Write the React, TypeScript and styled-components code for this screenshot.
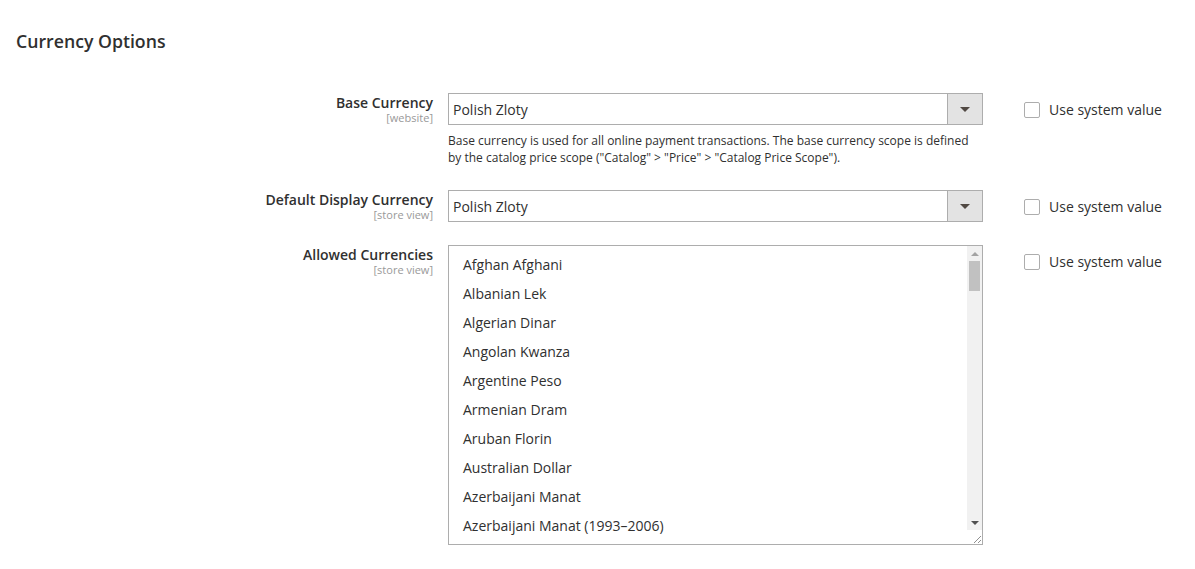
import React from "react";
import styled, { createGlobalStyle } from "styled-components";

const Global = createGlobalStyle`
  html, body { margin: 0; padding: 0; background: #fff; }
  body { font-family: "Open Sans", "Noto Sans", sans-serif; color: #303030; }
`;

const Page = styled.div`
  padding: 30px 0 0 16px;
  width: 1179px;
`;

const Title = styled.h2`
  margin: 0 0 41px;
  font-size: 17.7px;
  font-weight: 600;
  line-height: 22px;
  color: #303030;
`;

const Form = styled.div`
  display: flex;
  flex-direction: column;
  gap: 23px;
`;

const Row = styled.div<{ $extra?: number }>`
  display: grid;
  grid-template-columns: 417px 535px auto;
  column-gap: 15px;
  align-items: start;
  margin-top: ${(p) => p.$extra ?? 0}px;
`;

const LabelCol = styled.div`
  text-align: right;
  padding-top: 1px;
  display: flex;
  flex-direction: column;
  align-items: flex-end;
`;

const LabelText = styled.span`
  font-size: 14px;
  font-weight: 600;
  line-height: 17px;
  color: #303030;
`;

const Scope = styled.span`
  font-size: 11px;
  line-height: 13px;
  color: #999;
`;

const Field = styled.div`
  display: flex;
  flex-direction: column;
`;

const Select = styled.div`
  height: 32px;
  box-sizing: border-box;
  border: 1px solid #adadad;
  display: flex;
  align-items: stretch;
  background: #fff;
`;

const SelectValue = styled.div`
  flex: 1;
  font-size: 14px;
  line-height: 31px;
  padding-left: 4px;
  color: #303030;
`;

const SelectButton = styled.div`
  width: 34px;
  border-left: 1px solid #adadad;
  background: #e3e3e3;
  display: flex;
  align-items: center;
  justify-content: center;
`;

const Caret = styled.span`
  width: 0;
  height: 0;
  border-left: 5px solid transparent;
  border-right: 5px solid transparent;
  border-top: 5px solid #514943;
  margin-top: 1px;
`;

const Note = styled.div`
  font-size: 12px;
  line-height: 17px;
  margin-top: 7px;
  color: #303030;
`;

const SystemCol = styled.label`
  margin-left: 26px;
  padding-top: 8px;
  display: flex;
  align-items: center;
  gap: 9px;
  font-size: 14px;
  line-height: 17px;
  color: #303030;
`;

const Box = styled.span`
  width: 16px;
  height: 16px;
  box-sizing: border-box;
  border: 1px solid #adadad;
  border-radius: 2px;
  background: #fff;
  display: inline-block;
`;

const ListBox = styled.div`
  height: 300px;
  box-sizing: border-box;
  border: 1px solid #adadad;
  display: flex;
  overflow: hidden;
`;

const Options = styled.div`
  flex: 1;
  padding: 4px 0 0;
  overflow: hidden;
`;

const Option = styled.div`
  height: 29px;
  line-height: 29px;
  padding-left: 14px;
  font-size: 14px;
  color: #303030;
  white-space: nowrap;
`;

const Track = styled.div`
  width: 15px;
  background: #f1f1f1;
  display: flex;
  flex-direction: column;
  align-items: center;
`;

const ArrowBtn = styled.div<{ $down?: boolean }>`
  height: 15px;
  width: 15px;
  display: flex;
  align-items: center;
  justify-content: center;
  &::after {
    content: "";
    width: 0;
    height: 0;
    border-left: 4px solid transparent;
    border-right: 4px solid transparent;
    ${(p) => (p.$down ? "border-top: 4px solid #505050;" : "border-bottom: 4px solid #a3a3a3;")}
  }
`;

const Thumb = styled.div`
  width: 11px;
  height: 30px;
  background: #c1c1c1;
`;

const Spacer = styled.div`
  flex: 1;
`;

const Corner = styled.div`
  width: 15px;
  height: 14px;
  background: #fff;
  display: flex;
  align-items: flex-end;
  justify-content: flex-end;
`;

const currencies = [
  "Afghan Afghani",
  "Albanian Lek",
  "Algerian Dinar",
  "Angolan Kwanza",
  "Argentine Peso",
  "Armenian Dram",
  "Aruban Florin",
  "Australian Dollar",
  "Azerbaijani Manat",
  "Azerbaijani Manat (1993–2006)",
];

const UseSystem = () => (
  <SystemCol>
    <Box />
    Use system value
  </SystemCol>
);

export default function App() {
  return (
    <>
      <Global />
      <Page>
        <Title>Currency Options</Title>
        <Form>
          <Row>
            <LabelCol>
              <LabelText>Base Currency</LabelText>
              <Scope>[website]</Scope>
            </LabelCol>
            <Field>
              <Select>
                <SelectValue>Polish Zloty</SelectValue>
                <SelectButton>
                  <Caret />
                </SelectButton>
              </Select>
              <Note>
                Base currency is used for all online payment transactions. The base currency scope is defined
                by the catalog price scope ("Catalog" &gt; "Price" &gt; "Catalog Price Scope").
              </Note>
            </Field>
            <UseSystem />
          </Row>
          <Row $extra={1}>
            <LabelCol>
              <LabelText>Default Display Currency</LabelText>
              <Scope>[store view]</Scope>
            </LabelCol>
            <Field>
              <Select>
                <SelectValue>Polish Zloty</SelectValue>
                <SelectButton>
                  <Caret />
                </SelectButton>
              </Select>
            </Field>
            <UseSystem />
          </Row>
          <Row>
            <LabelCol>
              <LabelText>Allowed Currencies</LabelText>
              <Scope>[store view]</Scope>
            </LabelCol>
            <Field>
              <ListBox>
                <Options>
                  {currencies.map((c) => (
                    <Option key={c}>{c}</Option>
                  ))}
                </Options>
                <Track>
                  <ArrowBtn />
                  <Thumb />
                  <Spacer />
                  <ArrowBtn $down />
                  <Corner>
                    <svg width="12" height="12" viewBox="0 0 12 12">
                      <path d="M11 4 L4 11 M11 8 L8 11" stroke="#909090" strokeWidth="1" />
                    </svg>
                  </Corner>
                </Track>
              </ListBox>
            </Field>
            <UseSystem />
          </Row>
        </Form>
      </Page>
    </>
  );
}
